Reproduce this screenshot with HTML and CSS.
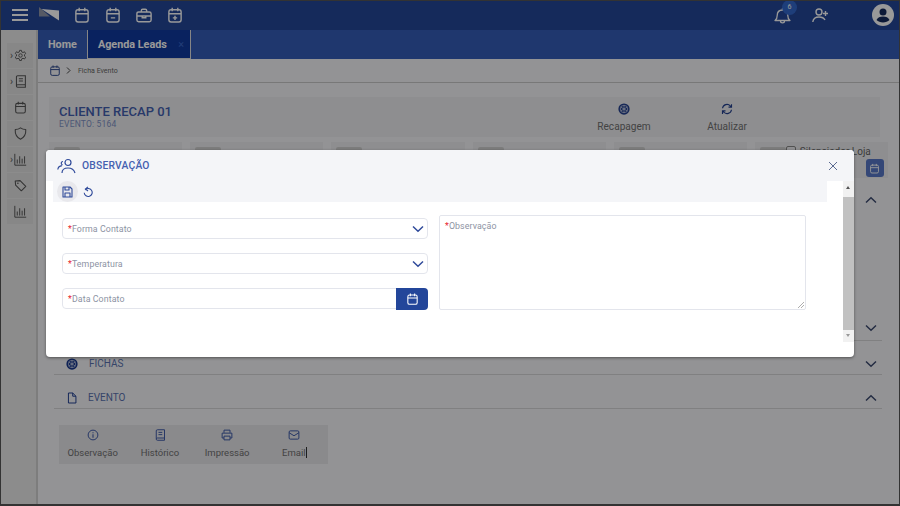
FILE: index.html
```html
<!DOCTYPE html>
<html lang="pt">
<head>
<meta charset="utf-8">
<title>Ficha Evento</title>
<link rel="stylesheet" href="styles.css">
</head>
<body>
<svg class="defs" width="0" height="0">
  <symbol id="cal" viewBox="0 0 16 18"><rect x="1" y="3" width="14" height="14" rx="2.5" fill="none" stroke="currentColor" stroke-width="1.6"/><path d="M1 7.5h14M4.8 .8v4M11.2 .8v4" fill="none" stroke="currentColor" stroke-width="1.6"/></symbol>
  <symbol id="calminus" viewBox="0 0 16 18"><rect x="1" y="3" width="14" height="14" rx="2.5" fill="none" stroke="currentColor" stroke-width="1.6"/><path d="M1 7.5h14M4.8 .8v4M11.2 .8v4M5.5 12.3h5" fill="none" stroke="currentColor" stroke-width="1.6"/></symbol>
  <symbol id="calplus" viewBox="0 0 16 18"><rect x="1" y="3" width="14" height="14" rx="2.5" fill="none" stroke="currentColor" stroke-width="1.6"/><path d="M1 7.5h14M4.8 .8v4M11.2 .8v4M5.5 12.3h5M8 9.8v5" fill="none" stroke="currentColor" stroke-width="1.6"/></symbol>
  <symbol id="brief" viewBox="0 0 18 16"><rect x="1" y="4" width="16" height="11" rx="2" fill="none" stroke="currentColor" stroke-width="1.6"/><path d="M6 4V2.5Q6 1 7.5 1h3Q12 1 12 2.5V4M1 8.5h16M7 8.5v2h4v-2" fill="none" stroke="currentColor" stroke-width="1.6"/></symbol>
  <symbol id="gear" viewBox="0 0 24 24"><circle cx="12" cy="12" r="3.2" fill="none" stroke="currentColor" stroke-width="1.7"/><path d="M10.3 2.5h3.4l.6 3 2.4 1.1 2.7-1.5 2.2 3.4-2.3 2 .1 2.7 2.2 2-2.2 3.3-2.7-1.4-2.4 1.1-.6 3h-3.4l-.6-3-2.4-1.1-2.7 1.4L2.400 15.000l2.200-2 .1-2.700-2.300-2L4.600 5.100l2.700 1.500 2.400-1.100z" fill="none" stroke="currentColor" stroke-width="1.7" stroke-linejoin="round"/></symbol>
  <symbol id="book" viewBox="0 0 16 16"><path d="M3 13V2.500Q3 1 4.500 1H14v11H4.500Q3 12 3 13.500T4.500 15H14v-3M6 4.500h5M6 7.500h5" fill="none" stroke="currentColor" stroke-width="1.3"/></symbol>
  <symbol id="shield" viewBox="0 0 16 16"><path d="M8 1c2 1.500 4 2 6.500 2 .3 5-1.500 9.500-6.500 12C3 12.500 1.200 8 1.500 3 4 3 6 2.500 8 1z" fill="none" stroke="currentColor" stroke-width="1.3" stroke-linejoin="round"/></symbol>
  <symbol id="chart" viewBox="0 0 16 16"><path d="M1 1v14h14M4 13V8M7 13V4M10 13V7M13 13V4" fill="none" stroke="currentColor" stroke-width="1.200"/></symbol>
  <symbol id="tag" viewBox="0 0 16 16"><path d="M1.500 2.500 7.500 2l7 7-5.500 5.500-7-7z" fill="none" stroke="currentColor" stroke-width="1.300" stroke-linejoin="round"/><circle cx="4.800" cy="5.200" r="1" fill="currentColor"/></symbol>
  <symbol id="wheel" viewBox="0 0 16 16"><circle cx="8" cy="8" r="7.500" fill="currentColor"/><circle cx="8" cy="8" r="5" fill="none" stroke="#fff" stroke-opacity=".75" stroke-width="1"/><path d="M8 3v10M3.700 5.500l8.600 5M3.700 10.500l8.600-5" stroke="#fff" stroke-opacity=".75" stroke-width="1"/></symbol>
  <symbol id="refresh" viewBox="0 0 16 16"><path d="M2 7a6 6 0 0 1 10.500-3l1.500 1.500M14 9a6 6 0 0 1-10.500 3L2 10.500M14 1.500v4h-4M2 14.500v-4h4" fill="none" stroke="currentColor" stroke-width="1.500"/></symbol>
  <symbol id="file" viewBox="0 0 14 16"><path d="M2 1h6l4.500 4.500V15H2zM8 1v4.500h4.500" fill="none" stroke="currentColor" stroke-width="1.300" stroke-linejoin="round"/></symbol>
  <symbol id="info" viewBox="0 0 16 16"><circle cx="8" cy="8" r="6.500" fill="none" stroke="currentColor" stroke-width="1.300"/><path d="M8 7v4.500M8 4.300v1.400" stroke="currentColor" stroke-width="1.400"/></symbol>
  <symbol id="print" viewBox="0 0 16 16"><path d="M4 5V1.500h8V5M4 12H1.500V5.500h13V12H12M4 9.500h8v5H4z" fill="none" stroke="currentColor" stroke-width="1.300" stroke-linejoin="round"/></symbol>
  <symbol id="mail" viewBox="0 0 16 16"><rect x="1.500" y="2.500" width="13" height="11" rx="1.500" fill="none" stroke="currentColor" stroke-width="1.300"/><path d="M1.500 5 8 9l6.500-4" fill="none" stroke="currentColor" stroke-width="1.300"/></symbol>
  <symbol id="down" viewBox="0 0 12 8"><path d="M1 1.500 6 6.200l5-4.700" fill="none" stroke="currentColor" stroke-width="1.500"/></symbol>
  <symbol id="up" viewBox="0 0 12 8"><path d="M1 6.500 6 1.800l5 4.700" fill="none" stroke="currentColor" stroke-width="1.500"/></symbol>
</svg>

<div class="page">
  <header class="topbar">
    <button class="burger" aria-label="Menu"><span></span><span></span><span></span></button>
    <svg class="logo" width="20" height="14" viewBox="0 0 20 14"><path d="M0 0v9.500h11z" fill="#8f97a8"/><path d="M2.500 2 20 3.500V13.500z" fill="#fff"/></svg>
    <nav class="topnav">
      <svg class="t-ic" width="14" height="16"><use href="#cal"/></svg>
      <svg class="t-ic" width="14" height="16"><use href="#calminus"/></svg>
      <svg class="t-ic" width="16" height="15"><use href="#brief"/></svg>
      <svg class="t-ic" width="14" height="16"><use href="#calplus"/></svg>
    </nav>
    <div class="topright">
      <span class="bell">
        <svg width="17" height="17" viewBox="0 0 17 17"><path d="M1 13.500c1.500-1 2.200-2.500 2.200-5 0-3.300 2-5.500 5.300-5.500s5.300 2.200 5.300 5.500c0 2.500.7 4 2.200 5zM6.500 14c0 2.500 4 2.500 4 0M8.500 1v2" fill="none" stroke="currentColor" stroke-width="1.300" stroke-linejoin="round"/></svg>
        <b class="badge">6</b>
      </span>
      <svg class="adduser" width="17" height="15" viewBox="0 0 17 15"><circle cx="7" cy="4" r="3" fill="none" stroke="currentColor" stroke-width="1.400"/><path d="M.8 14c.4-3.500 3-5 6.200-5s5 1 6 3M13.500 3v5M11 5.500h5" fill="none" stroke="currentColor" stroke-width="1.400"/></svg>
      <svg class="avatar" width="22" height="22" viewBox="0 0 22 22"><circle cx="11" cy="11" r="11" fill="#fff"/><circle cx="11" cy="8" r="3.500" fill="#152a5c"/><path d="M4.500 16c1-2.500 3.500-3.500 6.500-3.500s5.500 1 6.500 3.500c-1.500 1.600-4 2.500-6.500 2.500s-5-.9-6.500-2.500z" fill="#152a5c"/></svg>
    </div>
  </header>

  <div class="shell">
    <aside class="rail">
      <div class="tile"><i class="car">›</i><svg width="13" height="13"><use href="#gear"/></svg></div>
      <div class="tile"><i class="car">›</i><svg width="13" height="13"><use href="#book"/></svg></div>
      <div class="tile"><svg width="11" height="13"><use href="#cal"/></svg></div>
      <div class="tile"><svg width="13" height="13"><use href="#shield"/></svg></div>
      <div class="tile"><i class="car">›</i><svg width="13" height="13"><use href="#chart"/></svg></div>
      <div class="tile"><svg width="13" height="13"><use href="#tag"/></svg></div>
      <div class="tile"><svg width="13" height="13"><use href="#chart"/></svg></div>
    </aside>

    <main class="main">
      <div class="tabs">
        <span class="tab">Home</span>
        <span class="tab active">Agenda Leads<em class="tab-x">×</em></span>
      </div>
      <div class="crumbs">
        <svg width="10" height="11"><use href="#cal"/></svg>
        <svg class="crumb-sep" width="5" height="7" viewBox="0 0 5 7"><path d="M1 .5 4 3.500 1 6.500" fill="none" stroke="currentColor" stroke-width="1"/></svg>
        <span>Ficha Evento</span>
      </div>

      <section class="content">
        <div class="head-card">
          <div class="head-title">
            <h1>CLIENTE RECAP 01</h1>
            <p>EVENTO: 5164</p>
          </div>
          <div class="head-act act-a"><svg width="12" height="12"><use href="#wheel"/></svg><span>Recapagem</span></div>
          <div class="head-act act-b"><svg width="12" height="12"><use href="#refresh"/></svg><span>Atualizar</span></div>
        </div>

        <div class="cards">
          <div class="card"><span class="chip"></span></div>
          <div class="card"><span class="chip"></span></div>
          <div class="card"><span class="chip"></span></div>
          <div class="card"><span class="chip"></span></div>
          <div class="card"><span class="chip"></span></div>
          <div class="card">
            <span class="chip"></span><span class="check"></span><span class="loja">Silenciador Loja</span>
            <span class="cal-btn"><svg width="9" height="11"><use href="#cal"/></svg></span>
          </div>
        </div>

        <div class="acc first"><svg class="chev" width="12" height="8"><use href="#up"/></svg></div>
        <div class="acc tall"><svg class="chev" width="12" height="8"><use href="#down"/></svg></div>
        <div class="acc low">
          <svg class="acc-ic wheel" width="12" height="12"><use href="#wheel"/></svg><span class="acc-t">FICHAS</span>
          <svg class="chev" width="12" height="8"><use href="#down"/></svg>
        </div>
        <div class="acc low">
          <svg class="acc-ic" width="10" height="12"><use href="#file"/></svg><span class="acc-t">EVENTO</span>
          <svg class="chev" width="12" height="8"><use href="#up"/></svg>
        </div>

        <div class="actions">
          <div class="action"><svg width="12" height="12"><use href="#info"/></svg><span>Observação</span></div>
          <div class="action"><svg width="12" height="12"><use href="#book"/></svg><span>Histórico</span></div>
          <div class="action"><svg width="12" height="12"><use href="#print"/></svg><span>Impressão</span></div>
          <div class="action"><svg width="12" height="12"><use href="#mail"/></svg><span>Email<u class="caret"></u></span></div>
        </div>
      </section>
    </main>
  </div>

  <div class="overlay"></div>

  <div class="modal">
    <div class="m-head">
      <svg class="m-ic" width="19" height="16" viewBox="0 0 19 16"><circle cx="11" cy="4.500" r="3" fill="none" stroke="currentColor" stroke-width="1.200"/><path d="M5 15c0-3.300 2.500-5 6-5s6 1.700 7 5M6 3.500C4 3.500 3.500 6 5.500 7M.8 11.500c.3-2.500 2-3.500 4.200-3.800" fill="none" stroke="currentColor" stroke-width="1.200"/></svg>
      <span class="m-title">OBSERVAÇÃO</span>
      <svg class="m-close" width="10" height="10" viewBox="0 0 10 10"><path d="M1 1l8 8M9 1l-8 8" stroke="currentColor" stroke-width="1"/></svg>
    </div>
    <div class="m-wrap">
      <div class="m-body">
        <div class="m-tools">
          <span class="tool on"><svg width="11" height="12" viewBox="0 0 11 12"><path d="M1 1h7l2 2v8H1zM3 1v3h4V1M3 11V7h5v4" fill="none" stroke="currentColor" stroke-width="1.100" stroke-linejoin="round"/></svg></span>
          <span class="tool"><svg width="10" height="12" viewBox="0 0 10 12"><path d="M2.200 3.800a4 4 0 1 1-1 3M5 .8 2.400 3l2.600 2" fill="none" stroke="currentColor" stroke-width="1.100"/></svg></span>
        </div>
        <form class="m-form">
          <div class="col-l">
            <div class="field"><span class="lbl"><b>*</b>Forma Contato</span><svg class="f-chev" width="12" height="8"><use href="#down"/></svg></div>
            <div class="field"><span class="lbl"><b>*</b>Temperatura</span><svg class="f-chev" width="12" height="8"><use href="#down"/></svg></div>
            <div class="field date"><span class="lbl"><b>*</b>Data Contato</span><span class="f-btn"><svg width="11" height="12"><use href="#cal"/></svg></span></div>
          </div>
          <div class="area">
            <span class="lbl"><b>*</b>Observação</span>
            <svg class="grip" width="6" height="6" viewBox="0 0 6 6"><path d="M0 6l6-6M3 6l3-3" stroke="#999" stroke-width=".8"/></svg>
          </div>
        </form>
      </div>
      <div class="scroll">
        <span class="sc-up"></span>
        <span class="sc-thumb"></span>
        <span class="sc-down"></span>
      </div>
    </div>
  </div>
</div>
</body>
</html>
```
FILE: styles.css
```css
* { box-sizing: border-box; }
html, body { margin: 0; padding: 0; }
body { width: 900px; height: 506px; overflow: hidden; font-family: Roboto, "Liberation Sans", sans-serif; background: #f6f6f8; }
.defs { position: absolute; }
.page { position: relative; width: 900px; height: 506px; display: flex; flex-direction: column; overflow: hidden; }

.topbar { height: 30px; flex: none; background: #234698; display: flex; align-items: center; color: #fff; padding-left: 12px; }
.burger { width: 16px; height: 12px; padding: 0; border: 0; background: none; display: flex; flex-direction: column; justify-content: space-between; }
.burger span { height: 2px; background: #fff; display: block; }
.logo { margin: -3px 0 0 11px; }
.topnav { display: flex; align-items: center; margin-left: 16px; color: #fff; gap: 17px; }
.topnav .t-ic:nth-child(3) { margin: 0 -1px; }
.topright { margin-left: auto; display: flex; align-items: center; color: #fff; padding-right: 6px; }
.bell { position: relative; display: flex; margin-right: 21px; }
.badge { position: absolute; left: 8px; top: -7px; width: 15px; height: 15px; border-radius: 50%; background: #3368cc; font: 400 7px/15px Roboto, sans-serif; text-align: center; }
.adduser { margin-right: 43px; }

.shell { flex: 1; display: flex; min-height: 0; }
.rail { width: 38px; flex: none; background: #e9e9e9; border-right: 2px solid #d0d0d0; padding: 13px 0 0 7px; display: flex; flex-direction: column; gap: 1px; color: #555; }
.tile { width: 26px; height: 25px; background: #e2e2e2; position: relative; display: flex; align-items: center; justify-content: center; }
.car { position: absolute; left: 3px; top: 7px; font: normal 10px/12px Roboto, sans-serif; }

.main { flex: 1; display: flex; flex-direction: column; min-width: 0; }
.tabs { height: 29px; flex: none; background: #345cb8; display: flex; color: #fff; font-weight: 700; font-size: 10.800px; }
.tab { padding: 0 10px; line-height: 29px; }
.tab.active { background: #103a9e; width: 104px; border-left: 1px solid #e0e0e0; border-right: 1px solid #e0e0e0; border-bottom: 1px solid #e0e0e0; position: relative; }
.tab-x { position: absolute; right: 6px; top: 0; font-style: normal; font-weight: 400; color: #3a66c8; }
.crumbs { height: 24px; flex: none; border-bottom: 1px solid #c8c8c8; display: flex; align-items: center; padding: 0 0 0 12px; color: #2f4a8f; font-size: 7px; }
.crumbs span { color: #666; margin-left: 7px; }
.crumb-sep { margin-left: 6px; color: #444; }

.content { flex: 1; padding: 14px 12px 0 11px; min-height: 0; }
.head-card { height: 40px; width: 831px; background: #ededf0; display: flex; padding: 0 0 0 10px; align-items: flex-start; }
.head-title { width: 520px; padding-top: 7px; }
.head-title h1 { margin: 0; font-size: 13px; line-height: 15px; font-weight: 500; color: #4460b0; }
.head-title p { margin: 0; font-size: 8.500px; line-height: 10px; color: #7f92c6; letter-spacing: .2px; }
.head-act { display: flex; flex-direction: column; align-items: center; color: #23408f; padding-top: 6px; }
.head-act span { color: #707070; font-size: 10.100px; line-height: 13px; margin-top: 5px; }
.act-a { width: 80px; margin-left: 5px; }
.act-b { width: 60px; margin-left: 33px; }
.cards { display: flex; gap: 8px; margin-top: 5px; height: 36px; width: 839px; }
.card { flex: 1; background: #ededf0; padding: 5px; position: relative; }
.chip { display: block; width: 26px; height: 6px; background: #cfcfcf; border-radius: 2px; }
.check { position: absolute; left: 31px; top: 4px; width: 10px; height: 10px; border: 1px solid #888; border-radius: 2px; }
.loja { position: absolute; left: 45px; top: 4px; font-size: 10px; line-height: 12px; color: #666; white-space: nowrap; }
.cal-btn { position: absolute; left: 111px; top: 17px; width: 18px; height: 18px; background: #5777c6; border-radius: 3px; color: #fff; display: flex; align-items: center; justify-content: center; }

.acc { width: 828px; height: 34px; margin-left: 5px; border-bottom: 1px solid #d5d5d8; display: flex; align-items: center; color: #3c58a8; }
.acc .chev { margin-left: auto; margin-right: 5px; color: #3c4a70; }
.acc.first { height: 31px; margin-top: 6px; align-items: flex-start; padding-top: 12px; border: 0; }
.acc.tall { height: 126px; align-items: flex-end; padding-bottom: 8px; }
.acc.low { padding-top: 12px; }
.acc-ic { margin-left: 13px; color: #14358c; }
.acc-ic.wheel { margin-left: 12px; }
.acc-t { font-size: 10px; margin-left: 11px; color: #5a72b0; }
.actions { width: 269px; height: 39px; margin: 16px 0 0 10px; background: #e6e6ea; display: flex; }
.action { width: 67.300px; padding-top: 4px; display: flex; flex-direction: column; align-items: center; color: #3c58a8; }
.action span { color: #707070; font-size: 9.500px; line-height: 13px; margin-top: 5px; white-space: nowrap; }
.caret { display: inline-block; width: 1px; height: 11px; background: #333; vertical-align: -2px; }

.overlay { position: absolute; inset: 0; background: rgba(0,0,0,.4); border: 1px solid #333; border-bottom-width: 2px; }

.modal { position: absolute; left: 46px; top: 150px; width: 808px; height: 207px; background: #fff; border-radius: 4px; box-shadow: 0 1px 3px rgba(0,0,0,.45); display: flex; flex-direction: column; overflow: hidden; }
.m-head { height: 31px; flex: none; background: #f4f5f8; display: flex; align-items: center; padding: 0 16px 0 11px; color: #2f4a9a; }
.m-title { font-size: 10.300px; font-weight: 500; margin-left: 6px; color: #4460b0; letter-spacing: .2px; }
.m-close { margin-left: auto; color: #5a6a90; }
.m-wrap { flex: 1; display: flex; min-height: 0; }
.m-body { flex: 1; min-width: 0; }
.m-tools { width: 774px; height: 21px; margin-left: 7px; background: #f4f5f8; display: flex; align-items: center; padding-left: 4px; }
.tool { width: 21px; height: 21px; display: flex; align-items: center; justify-content: center; color: #2f4a9a; }
.tool.on { background: #e8e8ec; border-radius: 50%; }
.tool + .tool { margin-left: -1px; }
.m-form { display: flex; padding: 13px 0 0 16px; }
.col-l { width: 366px; display: flex; flex-direction: column; padding-top: 3px; gap: 14px; }
.field { height: 21px; border: 1px solid #e3e5ec; border-radius: 4px; position: relative; display: flex; align-items: center; padding-left: 5px; background: #fff; }
.lbl { display: block; font-size: 8.800px; color: #8d93a3; line-height: 12px; letter-spacing: .1px; }
.lbl b { color: #e8222e; font-weight: 400; }
.f-chev { position: absolute; right: 3px; top: 6px; color: #2f4a9a; }
.f-btn { position: absolute; right: -1px; top: -1px; width: 32px; height: 22px; background: #23469a; border-radius: 0 4px 4px 0; color: #fff; display: flex; align-items: center; justify-content: center; }
.area { width: 367px; height: 95px; margin-left: 11px; border: 1px solid #e3e5ec; border-radius: 2px; padding: 4px 5px; position: relative; }
.grip { position: absolute; right: 1px; bottom: 1px; }
.scroll { width: 11px; flex: none; background: #f1f1f1; margin-left: 16px; display: flex; flex-direction: column; height: 161px; }
.sc-up, .sc-down { height: 16px; flex: none; position: relative; }
.sc-down { height: 12px; }
.sc-up::after, .sc-down::after { content: ""; position: absolute; left: 3px; width: 0; height: 0; border-left: 2.500px solid transparent; border-right: 2.500px solid transparent; }
.sc-up::after { top: 5px; border-bottom: 3px solid #555; }
.sc-down::after { top: 4px; border-top: 3px solid #999; }
.sc-thumb { flex: 1; background: #c1c1c1; }
```
